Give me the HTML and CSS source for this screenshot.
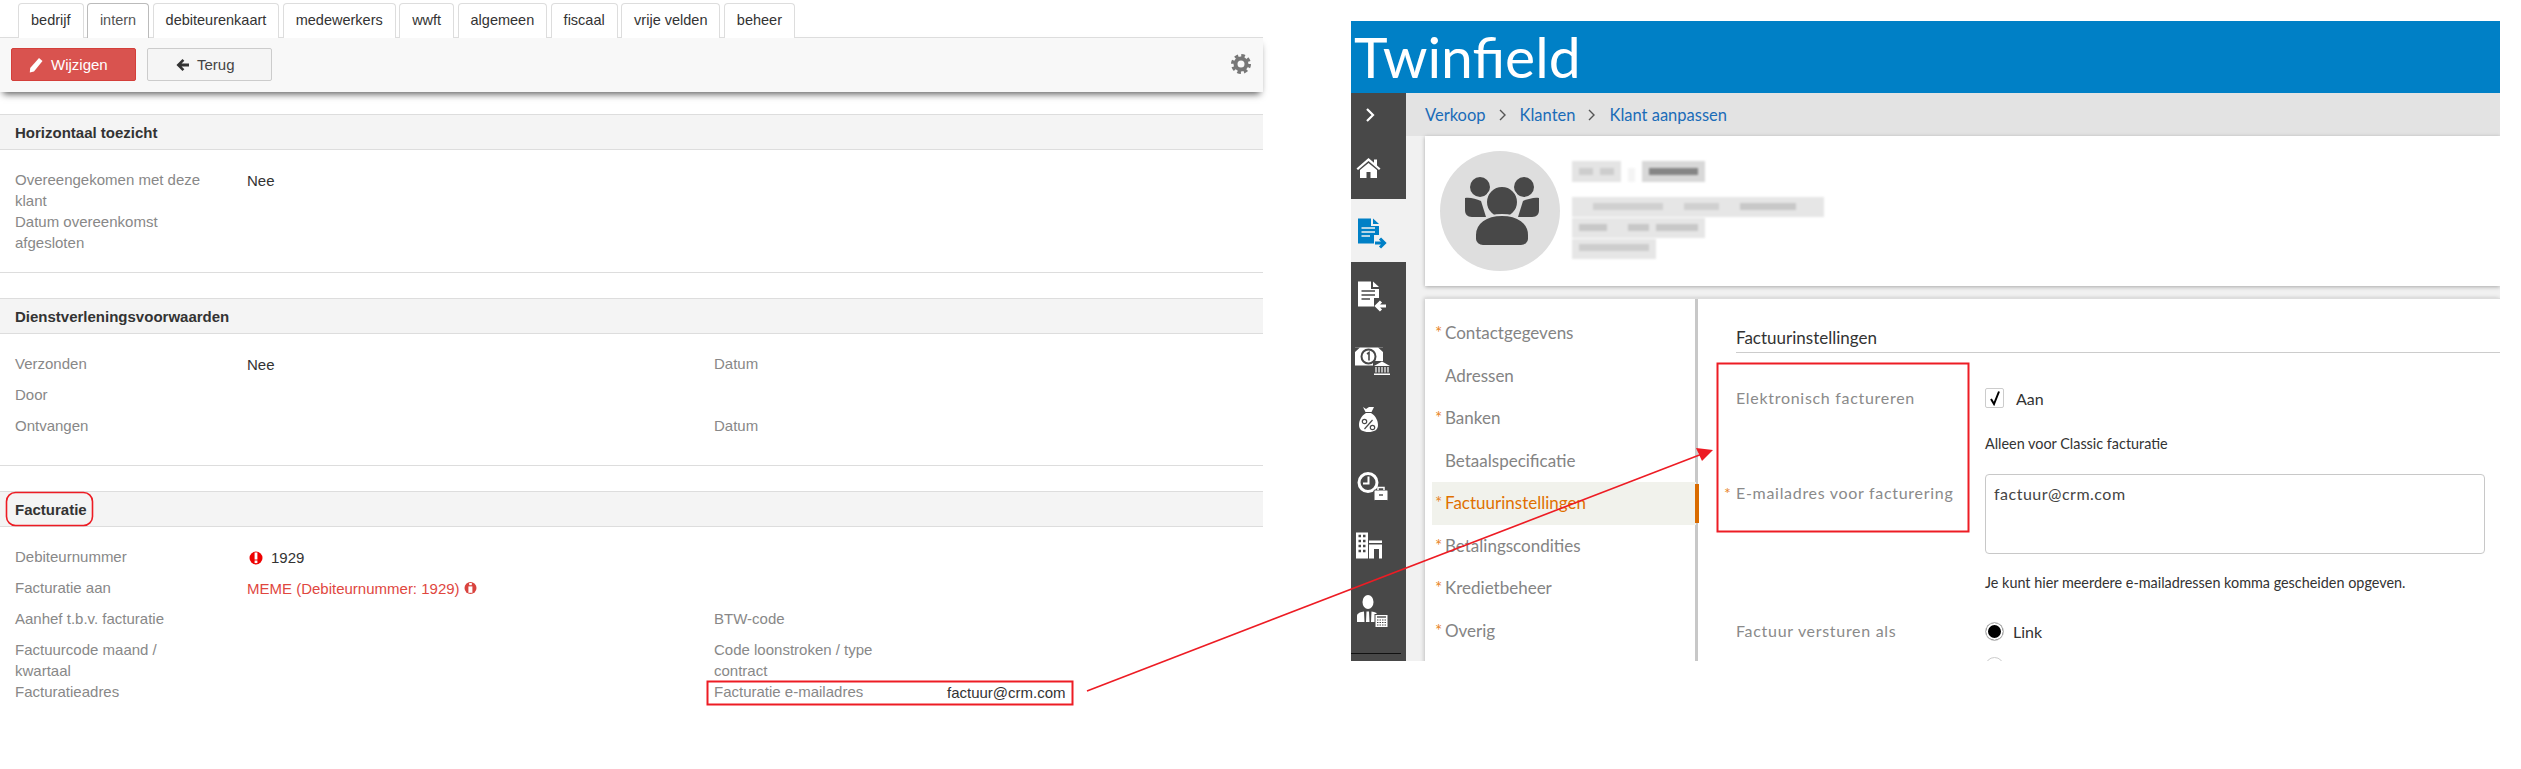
FILE: index.html
```html
<!DOCTYPE html>
<html>
<head>
    <title>Factuur e-mailadres</title>
    <link rel="stylesheet" href="styles.css">
</head>
<body>
    <div class="crm">
        <div class="tabs">
            <div class="tab">bedrijf</div>
            <div class="tab active">intern</div>
            <div class="tab">debiteurenkaart</div>
            <div class="tab">medewerkers</div>
            <div class="tab">wwft</div>
            <div class="tab">algemeen</div>
            <div class="tab">fiscaal</div>
            <div class="tab">vrije velden</div>
            <div class="tab">beheer</div>
        </div>
        <div class="toolbar">
            <div class="btn btn-red">
                <svg width="14" height="16" viewBox="0 0 14 16"><path d="M10 1 L13.5 4 L5 14.5 L0.8 15.5 L1.2 11 Z" fill="#fff"/></svg>
                Wijzigen
            </div>
            <div class="btn btn-grey">
                <svg width="13" height="14" viewBox="0 0 14 14"><path d="M7 0.5 L9 2.5 L6 5.5 L14 5.5 L14 8.5 L6 8.5 L9 11.5 L7 13.5 L0.5 7 Z" fill="#333"/></svg>
                Terug
            </div>
            <svg class="gear" width="20" height="20" viewBox="0 0 20 20">
                <circle cx="10" cy="10" r="5.5" fill="none" stroke="#777" stroke-width="4"/>
                <circle cx="10" cy="10" r="8.4" fill="none" stroke="#777" stroke-width="3.2" stroke-dasharray="3.6 3"/>
            </svg>
        </div>

        <div class="section first">
            <div class="section-head">Horizontaal toezicht</div>
            <div class="section-body">
                <div class="row">
                    <div class="lbl">Overeengekomen met deze klant</div>
                    <div class="val">Nee</div>
                </div>
                <div class="row">
                    <div class="lbl">Datum overeenkomst afgesloten</div>
                </div>
            </div>
        </div>

        <div class="section">
            <div class="section-head">Dienstverleningsvoorwaarden</div>
            <div class="section-body">
                <div class="row">
                    <div class="lbl">Verzonden</div>
                    <div class="val">Nee</div>
                    <div class="lbl">Datum</div>
                </div>
                <div class="row">
                    <div class="lbl">Door</div>
                </div>
                <div class="row">
                    <div class="lbl">Ontvangen</div>
                    <div class="val"></div>
                    <div class="lbl">Datum</div>
                </div>
            </div>
        </div>

        <div class="section last">
            <div class="section-head">Facturatie</div>
            <div class="section-body">
                <div class="row">
                    <div class="lbl">Debiteurnummer</div>
                    <div class="val">
                        <svg class="alert" width="14" height="18" viewBox="0 0 14 18"><circle cx="7" cy="9" r="6.5" fill="#e00"/><rect x="5.6" y="3.5" width="2.8" height="7" fill="#fff"/><rect x="5.6" y="11.5" width="2.8" height="2.6" fill="#fff"/></svg>
                        1929
                    </div>
                </div>
                <div class="row">
                    <div class="lbl">Facturatie aan</div>
                    <div class="val red">
                        MEME (Debiteurnummer: 1929)
                        <svg class="info" width="13" height="16" viewBox="0 0 13 16"><circle cx="6.5" cy="8" r="6" fill="#d9433e"/><rect x="5.2" y="3" width="2.6" height="2.2" fill="#fff"/><rect x="4.4" y="6.4" width="4" height="6.4" fill="#fff"/></svg>
                    </div>
                </div>
                <div class="row">
                    <div class="lbl">Aanhef t.b.v. facturatie</div>
                    <div class="val"></div>
                    <div class="lbl">BTW-code</div>
                </div>
                <div class="row">
                    <div class="lbl">Factuurcode maand / kwartaal</div>
                    <div class="val"></div>
                    <div class="lbl">Code loonstroken / type contract</div>
                </div>
                <div class="row">
                    <div class="lbl">Facturatieadres</div>
                    <div class="val"></div>
                    <div class="lbl">Facturatie e-mailadres</div>
                    <div class="val mail">factuur@crm.com</div>
                </div>
            </div>
        </div>
    </div>

    <div class="tf">
        <div class="tf-top">Twinfield</div>
        <div class="tf-wrap">
            <div class="side">
                <div class="side-toggle">
                    <svg width="12" height="16" viewBox="0 0 12 16"><path d="M3 2 L9 8 L3 14" fill="none" stroke="#fff" stroke-width="2.2"/></svg>
                </div>
                <div class="side-item">
                    <svg width="36" height="36" viewBox="0 0 36 36" fill="#fff"><path d="M13.5 8 L19 12.8 V9.5 H22 V15.5 L25.5 18.5 L24 20 L13.5 11 L3 20 L1.5 18.5 Z"/><path d="M5 20 L13.5 13 L22 20 V28 H15.5 V22 H11.5 V28 H5 Z"/></svg>
                </div>
                <div class="side-item current">
                    <svg width="36" height="36" viewBox="0 0 36 36">
                        <path d="M3 5.5 H16 V13 H24 V22 H19 V30.5 H3 Z" fill="#0080c6"/>
                        <path d="M18 5.5 L24 11 H18 Z" fill="#0080c6"/>
                        <path d="M6.5 15 H20 M6.5 19 H20 M6.5 23 H15" stroke="#f1f1f1" stroke-width="1.6"/>
                        <path d="M20 30 H29 M25 25.5 L29.5 30 L25 34.5" fill="none" stroke="#0080c6" stroke-width="3"/>
                    </svg>
                </div>
                <div class="side-item">
                    <svg width="36" height="36" viewBox="0 0 36 36">
                        <path d="M3 5.5 H16 V13 H24 V22 H19 V30.5 H3 Z" fill="#fff"/>
                        <path d="M18 5.5 L24 11 H18 Z" fill="#fff"/>
                        <path d="M6.5 15 H20 M6.5 19 H20 M6.5 23 H15" stroke="#484848" stroke-width="1.6"/>
                        <path d="M31 30 H22 M26 25.5 L21.5 30 L26 34.5" fill="none" stroke="#fff" stroke-width="3"/>
                    </svg>
                </div>
                <div class="side-item">
                    <svg width="36" height="36" viewBox="0 0 36 36">
                        <rect x="0" y="8.5" width="28" height="18" fill="#fff"/>
                        <path d="M0 8.5 H5 L0 13 Z M28 8.5 H23 L28 13 Z" fill="#484848"/>
                        <circle cx="13.5" cy="17.5" r="7" fill="#fff" stroke="#484848" stroke-width="2"/>
                        <path d="M12 15 L14 13.5 V21.5" fill="none" stroke="#484848" stroke-width="1.6"/>
                        <rect x="18" y="22" width="18" height="15" fill="#484848"/>
                        <path d="M27 22.5 L35 27 H19 Z" fill="#fff"/>
                        <path d="M21 28 V33.5 M24 28 V33.5 M27 28 V33.5 M30 28 V33.5 M33 28 V33.5" stroke="#fff" stroke-width="1.2"/>
                        <rect x="19" y="34.5" width="16" height="2" fill="#fff"/>
                    </svg>
                </div>
                <div class="side-item">
                    <svg width="36" height="36" viewBox="0 0 36 36">
                        <path d="M8 5 L11 7 L14 5 L19 5 L16 11 C21 14 23 19 23 23 C23 28 19 30 13.5 30 C8 30 4 28 4 23 C4 19 6 14 11 11 L8 5 Z" fill="#fff"/>
                        <path d="M10 10.5 H17" stroke="#484848" stroke-width="1"/>
                        <circle cx="9.5" cy="19.5" r="2.2" fill="none" stroke="#484848" stroke-width="1.2"/>
                        <circle cx="17.5" cy="25.5" r="2.2" fill="none" stroke="#484848" stroke-width="1.2"/>
                        <path d="M17.5 18 L9.5 27" stroke="#484848" stroke-width="1.2"/>
                    </svg>
                </div>
                <div class="side-item">
                    <svg width="36" height="36" viewBox="0 0 36 36">
                        <circle cx="13" cy="17.5" r="9" fill="none" stroke="#fff" stroke-width="3"/>
                        <path d="M13.5 11.5 V18.5 H8" fill="none" stroke="#fff" stroke-width="2"/>
                        <rect x="19" y="25" width="14" height="10.5" rx="1" fill="#fff" stroke="#484848"/>
                        <path d="M23 25 V22.5 H29 V25" fill="none" stroke="#fff" stroke-width="1.5"/>
                        <path d="M24 30 H28" stroke="#484848" stroke-width="1.4"/>
                    </svg>
                </div>
                <div class="side-item">
                    <svg width="36" height="36" viewBox="0 0 36 36">
                        <rect x="1" y="4.5" width="12" height="26" fill="#fff"/>
                        <path d="M3.5 8 H6 M8 8 H10.5 M3.5 13 H6 M8 13 H10.5 M3.5 18 H6 M8 18 H10.5 M3.5 23 H6 M8 23 H10.5" stroke="#484848" stroke-width="2.4"/>
                        <path d="M14 12.5 H27 V15 H14 Z M14 16.5 H27 V30.5 H24 V21 H19 V30.5 H14 Z" fill="#fff"/>
                    </svg>
                </div>
                <div class="side-item">
                    <svg width="36" height="36" viewBox="0 0 36 36">
                        <ellipse cx="13" cy="11" rx="5.5" ry="7" fill="#fff"/>
                        <path d="M2 31 V25 C2 22 6 21 9 20.5 L9.5 31 Z M11 31 L11.5 20.5 H14 L14.5 31 Z M16 31 L16.5 20.5 C18 21 20 21 21.5 22 V31 Z" fill="#fff"/>
                        <rect x="20" y="23.5" width="13" height="13" fill="#fff" stroke="#484848"/>
                        <path d="M22 26 H31" stroke="#484848" stroke-width="1.4"/>
                        <path d="M22 29 H31 M22 31.5 H31 M22 34 H31" stroke="#484848" stroke-width="1.2" stroke-dasharray="1.5 1"/>
                    </svg>
                </div>
                <div class="side-rule"></div>
            </div>
            <div class="tf-main">
                <div class="crumbs">
                    <span>Verkoop</span>
                    <svg width="10" height="14" viewBox="0 0 10 14"><path d="M2 2 L7 7 L2 12" fill="none" stroke="#555" stroke-width="1.4"/></svg>
                    <span>Klanten</span>
                    <svg width="10" height="14" viewBox="0 0 10 14"><path d="M2 2 L7 7 L2 12" fill="none" stroke="#555" stroke-width="1.4"/></svg>
                    <span>Klant aanpassen</span>
                </div>
                <div class="tf-content">
                    <div class="card">
                        <svg class="avatar" width="120" height="120" viewBox="0 0 120 120">
                            <circle cx="60" cy="60" r="60" fill="#dedede"/>
                            <circle cx="40" cy="36" r="10" fill="#484848"/>
                            <circle cx="84" cy="36" r="10" fill="#484848"/>
                            <path d="M25 47 C30 46 36 48 41 50 L46 66 H32 C27 66 25 63 25 59 Z" fill="#484848"/>
                            <path d="M99 47 C94 46 88 48 83 50 L78 66 H92 C97 66 99 63 99 59 Z" fill="#484848"/>
                            <circle cx="62" cy="51" r="16" fill="#484848" stroke="#dedede" stroke-width="2"/>
                            <path d="M35 84 C35 72 46 64 62 64 C78 64 89 72 89 84 V88 C89 92 85 95 81 95 H43 C39 95 35 92 35 88 Z" fill="#484848" stroke="#dedede" stroke-width="2"/>
                        </svg>
                        <svg class="blurred" width="260" height="110" viewBox="0 0 260 110">
                            <rect x="0" y="5" width="49" height="21" fill="#e4e4e4"/>
                            <rect x="7" y="12" width="14" height="7" fill="#cdcdcd"/>
                            <rect x="28" y="12" width="14" height="7" fill="#cdcdcd"/>
                            <rect x="56" y="12" width="7" height="14" fill="#f4f4f4"/>
                            <rect x="70" y="5" width="63" height="21" fill="#d8d8d8"/>
                            <rect x="77" y="12" width="49" height="7" fill="#858585"/>
                            <rect x="0" y="41" width="252" height="20" fill="#e6e6e6"/>
                            <rect x="21" y="47" width="70" height="7" fill="#d0d0d0"/>
                            <rect x="112" y="47" width="35" height="7" fill="#d0d0d0"/>
                            <rect x="168" y="47" width="56" height="7" fill="#c8c8c8"/>
                            <rect x="0" y="62" width="133" height="20" fill="#e6e6e6"/>
                            <rect x="7" y="68" width="28" height="7" fill="#c8c8c8"/>
                            <rect x="56" y="68" width="21" height="7" fill="#c8c8c8"/>
                            <rect x="84" y="68" width="42" height="7" fill="#c8c8c8"/>
                            <rect x="0" y="83" width="84" height="20" fill="#e6e6e6"/>
                            <rect x="7" y="88" width="70" height="7" fill="#cdcdcd"/>
                        </svg>
                    </div>
                    <div class="panel">
                        <div class="menu">
                            <div class="menu-item"><span class="star">*</span>Contactgegevens</div>
                            <div class="menu-item"><span class="star"></span>Adressen</div>
                            <div class="menu-item"><span class="star">*</span>Banken</div>
                            <div class="menu-item"><span class="star"></span>Betaalspecificatie</div>
                            <div class="menu-item selected"><span class="star">*</span>Factuurinstellingen</div>
                            <div class="menu-item"><span class="star">*</span>Betalingscondities</div>
                            <div class="menu-item"><span class="star">*</span>Kredietbeheer</div>
                            <div class="menu-item"><span class="star">*</span>Overig</div>
                        </div>
                        <div class="settings">
                            <div class="settings-title">Factuurinstellingen</div>
                            <div class="field field-check">
                                <div class="field-lbl">Elektronisch factureren</div>
                                <div class="field-val check-line">
                                    <span class="checkbox">
                                        <svg width="14" height="16" viewBox="0 0 14 16"><path d="M3 9 L6 14 L11 1.5" fill="none" stroke="#000" stroke-width="2"/></svg>
                                    </span>
                                    Aan
                                </div>
                            </div>
                            <div class="field-hint first-hint">Alleen voor Classic facturatie</div>
                            <div class="field field-mail">
                                <div class="field-lbl"><span class="req">*</span>E-mailadres voor facturering</div>
                                <div class="mail-box">factuur@crm.com</div>
                            </div>
                            <div class="field-hint">Je kunt hier meerdere e-mailadressen komma gescheiden opgeven.</div>
                            <div class="field field-radio">
                                <div class="field-lbl">Factuur versturen als</div>
                                <div class="field-val radio-line"><span class="radio"></span>Link</div>
                            </div>
                            <div class="radio-cut"></div>
                        </div>
                    </div>
                </div>
            </div>
        </div>
    </div>

    <svg class="marks" width="2521" height="769" viewBox="0 0 2521 769">
        <rect x="93" y="7.5" width="47" height="25" rx="5" fill="none" stroke="#ed1c24" stroke-width="1.6"/>
        <rect x="6.5" y="492.5" width="86" height="33" rx="9" fill="none" stroke="#ed1c24" stroke-width="1.6"/>
        <rect x="707.5" y="681.5" width="365" height="23" fill="none" stroke="#ed1c24" stroke-width="2"/>
        <rect x="1717.5" y="363.5" width="251" height="168" fill="none" stroke="#ed1c24" stroke-width="2"/>
        <line x1="1087" y1="691" x2="1702" y2="454" stroke="#ed1c24" stroke-width="1.6"/>
        <polygon points="1696,448 1713,450 1702,461" fill="#ed1c24"/>
    </svg>
</body>
</html>
```

FILE: styles.css
```css
body {
    margin: 0;
    width: 2521px;
    height: 769px;
    overflow: hidden;
    background: #fff;
    display: flex;
    position: relative;
    font-family: "Liberation Sans", Arial, sans-serif;
}

/* left screenshot */
.crm {
    width: 1263px;
    flex: none;
    font-size: 15px;
    line-height: 21px;
    color: #333;
}

.tabs {
    display: flex;
    gap: 3.4px;
    padding: 3px 0 0 18px;
    height: 34px;
}

.tab {
    height: 35px;
    box-sizing: border-box;
    padding: 0 12px;
    line-height: 33px;
    font-size: 14.5px;
    background: #fff;
    border: 1px solid #ddd;
    border-bottom: 0;
    border-radius: 4px 4px 0 0;
    position: relative;
    z-index: 1;
}

.tab.active {
    border-color: #bbb;
    color: #555;
}

.toolbar {
    height: 55px;
    box-sizing: border-box;
    border-top: 1px solid #ddd;
    background: #f8f8f8;
    padding: 10px 12px 0 11px;
    display: flex;
    gap: 11px;
    box-shadow: 0 5px 7px -3px rgba(0,0,0,0.65);
    position: relative;
}

.btn {
    width: 125px;
    height: 33px;
    box-sizing: border-box;
    border-radius: 2px;
    display: flex;
    align-items: center;
    gap: 8px;
    font-size: 15px;
}

.btn-red {
    background: #d9534f;
    border: 1px solid #d43f3a;
    color: #fff;
    padding-left: 17px;
}

.btn-grey {
    background: #f5f5f5;
    border: 1px solid #ccc;
    color: #444;
    padding-left: 28px;
}

.gear {
    margin: 6px 0 0 auto;
}

.section {
    margin-top: 25px;
    border-bottom: 1px solid #ddd;
}

.section.first {
    margin-top: 22px;
}

.section.last {
    border-bottom: 0;
}

.section-head {
    height: 36px;
    box-sizing: border-box;
    padding-left: 15px;
    line-height: 35px;
    background: #f4f4f4;
    border-top: 1px solid #ddd;
    border-bottom: 1px solid #ddd;
    font-weight: bold;
    font-size: 15px;
}

.section-body {
    padding: 19px 0 19px 15px;
}

.row {
    display: grid;
    grid-template-columns: 232px 467px 233px auto;
    min-height: 31px;
}

.lbl {
    color: #888;
    width: 195px;
}

.val {
    padding-top: 1px;
    display: flex;
    align-items: flex-start;
    gap: 8px;
}

.val svg {
    margin-top: 2px;
}

.val .alert {
    margin-left: 2px;
}

.val.red {
    color: #e0473f;
    gap: 4px;
}

.val.mail {
    color: #333;
}

/* right screenshot */
.tf {
    margin: 21px 0 0 88px;
    width: 1149px;
    height: 640px;
    overflow: hidden;
    flex: none;
    font-family: Lato, "Noto Sans", sans-serif;
}

.tf-top {
    height: 72px;
    background: #0080c6;
    color: #fff;
    font-size: 57px;
    line-height: 70px;
    padding-left: 3px;
}

.tf-wrap {
    display: flex;
    height: 568px;
}

.side {
    width: 55px;
    flex: none;
    background: #484848;
}

.side-toggle {
    height: 43px;
    display: flex;
    align-items: center;
    padding-left: 13px;
}

.side-item {
    height: 63px;
    display: flex;
    align-items: center;
    padding-left: 4px;
}

.side-item.current {
    background: #f1f1f1;
}

.side-rule {
    height: 1px;
    width: 50px;
    margin-top: 13px;
    background: #111;
}

.tf-main {
    flex: 1;
    background: #f1f1f1;
}

.crumbs {
    height: 43px;
    background: #e3e3e3;
    display: flex;
    align-items: center;
    padding-left: 19px;
    gap: 12px;
    font-size: 16.5px;
    color: #1a6cb8;
}

.tf-content {
    padding-left: 19px;
}

.card {
    height: 150px;
    background: #fff;
    box-shadow: 0 1px 4px rgba(0,0,0,0.3);
    display: flex;
    align-items: center;
    padding-left: 15px;
    gap: 12px;
}

.avatar {
    flex: none;
}

.blurred {
    filter: blur(1px);
}

.panel {
    margin-top: 12px;
    height: 400px;
    background: #fff;
    border-top: 1px solid #ddd;
    box-shadow: -1px 0 4px rgba(0,0,0,0.2);
    display: flex;
}

.menu {
    width: 273px;
    flex: none;
    box-sizing: border-box;
    border-right: 3px solid #c8c8c8;
    padding: 13px 0 0 7px;
}

.menu-item {
    height: 42.5px;
    line-height: 42px;
    box-sizing: border-box;
    padding-left: 3px;
    font-size: 17px;
    color: #848484;
    position: relative;
    white-space: nowrap;
    margin-right: -1px;
}

.star {
    display: inline-block;
    width: 10px;
    color: #e8862a;
    font-size: 17px;
}

.menu-item.selected {
    background: #f1f2ec;
    color: #e07000;
}

.menu-item.selected::after {
    content: "";
    position: absolute;
    right: -3px;
    top: 2px;
    bottom: 2px;
    width: 4px;
    background: #d96b00;
}

.settings {
    flex: 1;
    padding: 0 0 0 38px;
    font-size: 14px;
}

.settings-title {
    height: 54px;
    box-sizing: border-box;
    padding-top: 26px;
    line-height: 26px;
    font-size: 17px;
    color: #333;
    border-bottom: 1px solid #ccc;
}

.field {
    display: flex;
}

.field-lbl {
    width: 249px;
    flex: none;
    color: #8a8a8a;
    font-size: 16px;
    letter-spacing: 0.7px;
    line-height: 20px;
    position: relative;
}

.req {
    position: absolute;
    left: -12px;
    color: #e8862a;
}

.field-check {
    margin-top: 35px;
}

.check-line {
    display: flex;
    align-items: center;
    gap: 12px;
    height: 20px;
    color: #333;
    font-size: 16px;
}

.checkbox {
    width: 19px;
    height: 20px;
    box-sizing: border-box;
    border: 1px solid #ccc;
    border-radius: 2px;
    display: flex;
    align-items: center;
    justify-content: center;
}

.field-hint {
    margin-left: 249px;
    font-size: 14.4px;
    line-height: 20px;
    color: #333;
}

.first-hint {
    margin-top: 26px;
}

.field-mail {
    margin-top: 20px;
}

.field-mail .field-lbl {
    margin-top: 9px;
}

.mail-box {
    width: 500px;
    height: 80px;
    box-sizing: border-box;
    border: 1px solid #c8c8c8;
    border-radius: 4px;
    padding: 9px 8px;
    font-size: 16px;
    line-height: 20px;
    letter-spacing: 0.5px;
    color: #444;
}

.field-mail + .field-hint {
    margin-top: 19px;
}

.field-radio {
    margin-top: 28px;
}

.radio-line {
    display: flex;
    align-items: center;
    gap: 9px;
    height: 20px;
    font-size: 16px;
    color: #333;
}

.radio {
    width: 19px;
    height: 19px;
    box-sizing: border-box;
    border: 1px solid #ccc;
    border-radius: 50%;
    background: #000;
    box-shadow: inset 0 0 0 2px #fff;
}

.radio-cut {
    width: 19px;
    height: 19px;
    box-sizing: border-box;
    margin: 16px 0 0 249px;
    border: 1px solid #ccc;
    border-radius: 50%;
}

/* red annotations drawn over both screenshots */
.marks {
    position: absolute;
    left: 0;
    top: 0;
    pointer-events: none;
}
```
